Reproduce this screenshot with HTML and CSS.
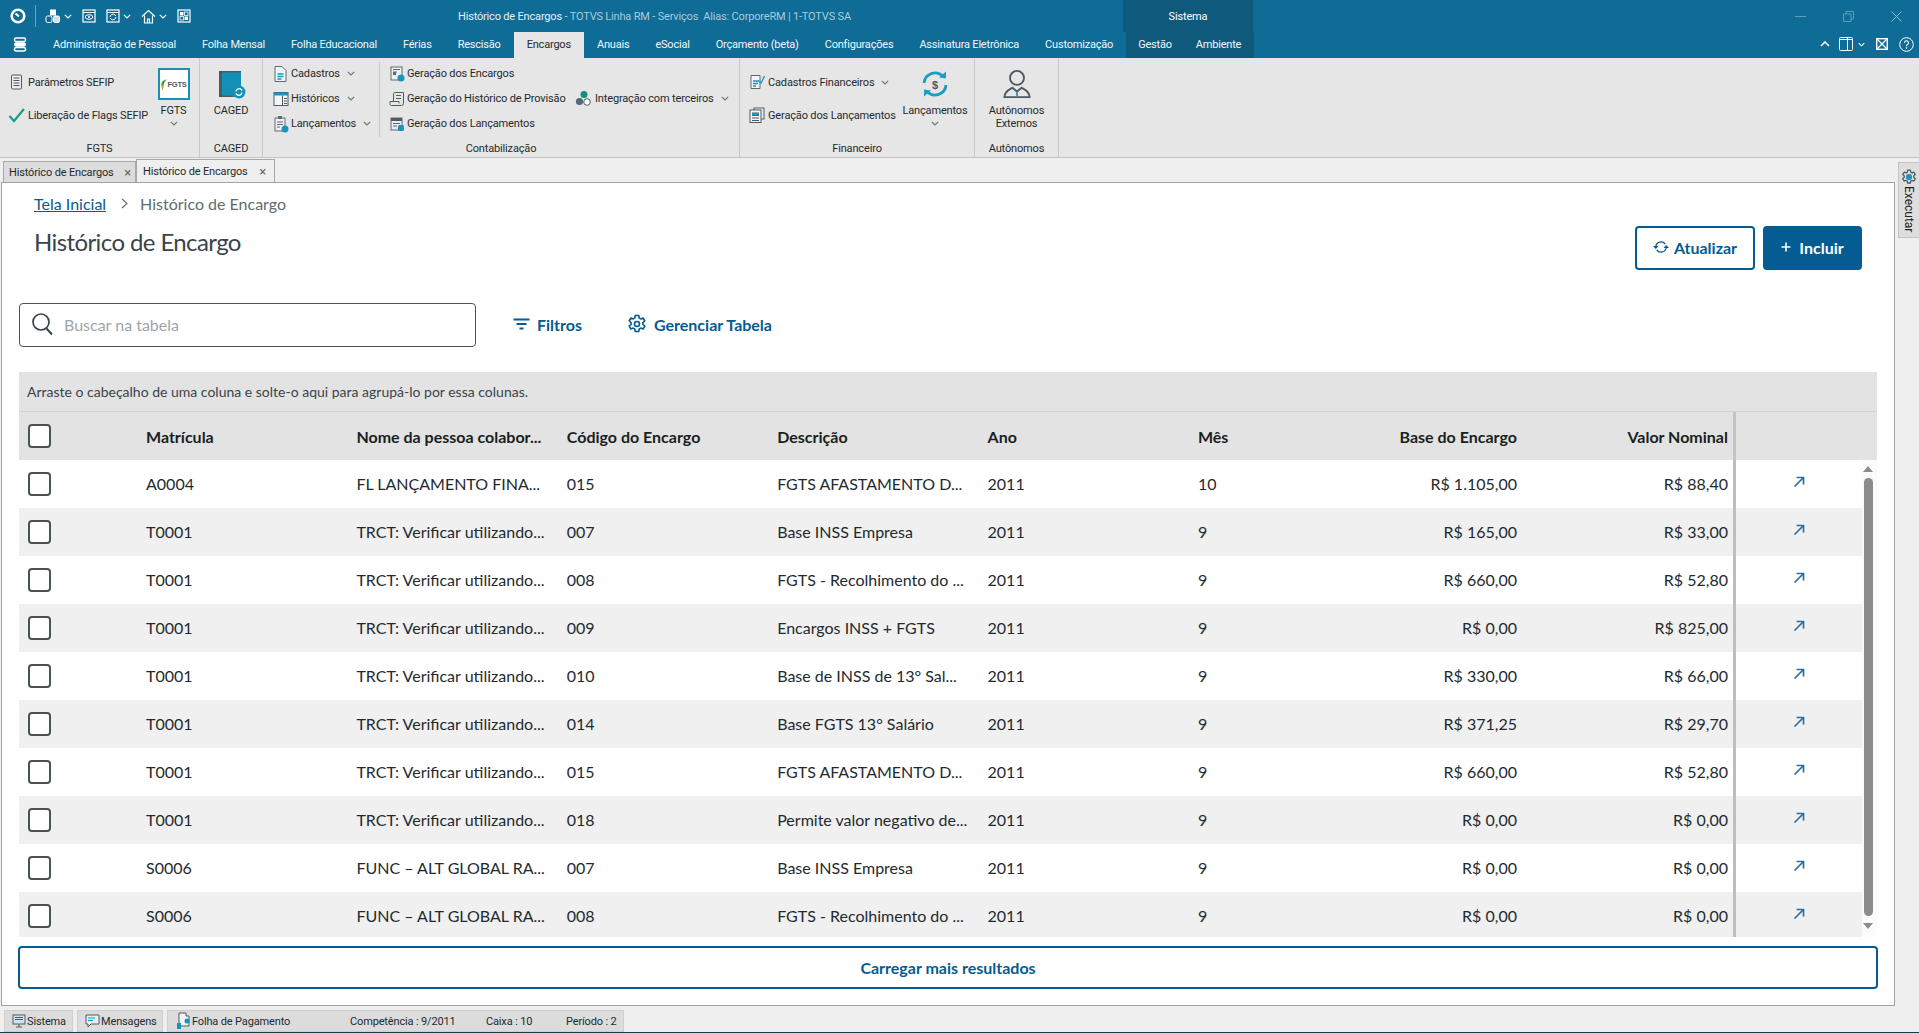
FILE: index.html
```html
<!DOCTYPE html>
<html lang="pt-BR">
<head>
<meta charset="utf-8">
<title>Histórico de Encargos</title>
<link rel="stylesheet" href="styles.css">
</head>
<body>
<svg class="defs" width="0" height="0" aria-hidden="true">
  <symbol id="chev" viewBox="0 0 8 5"><path d="M.8.8 4 4 7.2.8" fill="none" stroke="currentColor" stroke-width="1.2"/></symbol>
  <symbol id="go" viewBox="0 0 12 12"><path d="M1.5 10.5 10 2M3.5 1.5H10.5V8.5" fill="none" stroke="#2a6f9f" stroke-width="1.7"/></symbol>
  <symbol id="gear" viewBox="0 0 20 20"><path d="M8.300 1.500h3.400l.5 2.500 1.500.9 2.400-.9 1.700 3-1.900 1.600v1.800l1.900 1.600-1.700 3-2.400-.9-1.500.9-.5 2.500H8.300l-.5-2.500-1.500-.9-2.400.9-1.700-3 1.900-1.600V8.600L2.200 7l1.700-3 2.400.9 1.500-.9z" fill="none" stroke="currentColor" stroke-width="1.600" stroke-linejoin="round"/><circle cx="10" cy="10" r="2.500" fill="none" stroke="currentColor" stroke-width="1.600"/></symbol>
</svg>

<header class="topbar">
  <div class="titlerow">
    <div class="quick">
      <svg class="qi" width="18" height="18" viewBox="0 0 18 18"><circle cx="9" cy="9" r="6.300" fill="none" stroke="#fff" stroke-width="2.600"/><path d="M6.500 6.500 10 9.500" stroke="#fff" stroke-width="2"/></svg>
      <span class="qsep"></span>
      <svg class="qi" width="16" height="16" viewBox="0 0 16 16"><rect x="5" y="1.500" width="6" height="6" fill="#fff"/><rect x="1" y="8" width="6" height="6.500" rx="1.500" fill="none" stroke="#fff"/><rect x="8.500" y="8" width="6" height="6.500" rx="1.500" fill="#cfe0e8" stroke="#fff"/></svg>
      <svg class="qc" width="8" height="5"><use href="#chev"/></svg>
      <svg class="qi q2" width="14" height="14" viewBox="0 0 14 14"><rect x="1" y="1" width="12" height="12" fill="none" stroke="#fff" stroke-width="1.200"/><path d="M1 3.500h12" stroke="#fff"/><ellipse cx="7" cy="8" rx="3.800" ry="2.300" fill="none" stroke="#fff"/><circle cx="7" cy="8" r="1" fill="#fff"/></svg>
      <svg class="qi q2" width="14" height="14" viewBox="0 0 14 14"><rect x="1" y="1" width="12" height="12" fill="none" stroke="#fff" stroke-width="1.200"/><path d="M1 3.500h12" stroke="#fff"/><path d="M4 8a3 3 0 0 1 5-2l1 1M10 8a3 3 0 0 1-5 2L4 9" fill="none" stroke="#fff"/></svg>
      <svg class="qc" width="8" height="5"><use href="#chev"/></svg>
      <svg class="qi q2" width="15" height="15" viewBox="0 0 15 15"><path d="M1 7.500 7.500 1.500 14 7.500M3.500 6.500v7.500h8V6.500M6.500 14v-4h2v4" fill="none" stroke="#fff" stroke-width="1.200"/></svg>
      <svg class="qc" width="8" height="5"><use href="#chev"/></svg>
      <svg class="qi q2" width="14" height="14" viewBox="0 0 14 14"><rect x="1" y="1" width="12" height="12" fill="none" stroke="#fff" stroke-width="1.200"/><rect x="3" y="3" width="3.500" height="3.500" fill="#fff"/><rect x="7.500" y="3" width="3.500" height="3.500" fill="none" stroke="#fff" stroke-width=".8"/><rect x="3" y="7.500" width="3.500" height="3.500" fill="none" stroke="#fff" stroke-width=".8"/><rect x="7.500" y="7.500" width="3.500" height="3.500" fill="#fff"/></svg>
    </div>
    <div class="wintitle"><span class="wt-main">Histórico de Encargos</span> - TOTVS Linha RM - Serviços&nbsp; Alias: CorporeRM | 1-TOTVS SA</div>
    <div class="ctx-head">Sistema</div>
    <div class="winctl">
      <svg width="11" height="11" viewBox="0 0 11 11"><path d="M0 5.500h11" stroke="#5f9cb8"/></svg>
      <svg width="11" height="11" viewBox="0 0 11 11"><path d="M.5 3h7.500v7.500H.5zM3 3V.5h7.500V8H8" fill="none" stroke="#5f9cb8"/></svg>
      <svg width="11" height="11" viewBox="0 0 11 11"><path d="M.5.500l10 10M10.500.500l-10 10" stroke="#8fbacd"/></svg>
    </div>
  </div>
  <div class="tabrow">
    <svg class="appmenu" width="14" height="15" viewBox="0 0 14 15"><rect x="1.500" y="1" width="11" height="3.400" rx="1.500" fill="none" stroke="#fff" stroke-width="1.500"/><rect x="1.500" y="5.800" width="11" height="3.400" rx="1.500" fill="#fff" stroke="#fff"/><rect x="1.500" y="10.600" width="11" height="3.400" rx="1.500" fill="none" stroke="#fff" stroke-width="1.500"/></svg>
    <nav class="tabs">
      <a class="tab">Administração de Pessoal</a>
      <a class="tab">Folha Mensal</a>
      <a class="tab">Folha Educacional</a>
      <a class="tab">Férias</a>
      <a class="tab">Rescisão</a>
      <a class="tab active">Encargos</a>
      <a class="tab">Anuais</a>
      <a class="tab">eSocial</a>
      <a class="tab">Orçamento (beta)</a>
      <a class="tab">Configurações</a>
      <a class="tab">Assinatura Eletrônica</a>
      <a class="tab">Customização</a>
      <div class="ctx-tabs">
        <a class="tab">Gestão</a>
        <a class="tab">Ambiente</a>
      </div>
    </nav>
    <div class="tabtools">
      <svg width="10" height="6" viewBox="0 0 10 6"><path d="M1 5 5 1l4 4" fill="none" stroke="#fff" stroke-width="1.600"/></svg>
      <svg class="tt-panel" width="14" height="14" viewBox="0 0 14 14"><rect x=".5" y=".5" width="13" height="13" rx="1" fill="none" stroke="#fff"/><path d="M8.500.5v13M.5 2.500h13" stroke="#fff"/></svg>
      <svg class="tt-down" width="7" height="5"><use href="#chev"/></svg>
      <svg class="tt-x" width="12" height="12" viewBox="0 0 12 12"><rect x=".7" y=".7" width="10.600" height="10.600" fill="none" stroke="#fff" stroke-width="1.400"/><path d="M1 1l10 10M11 1 1 11" stroke="#fff" stroke-width="1.200"/></svg>
      <svg class="tt-help" width="15" height="15" viewBox="0 0 15 15"><circle cx="7.500" cy="7.500" r="6.800" fill="none" stroke="#fff"/><path d="M5.500 5.800a2 2 0 1 1 3 1.700c-.7.500-1 .8-1 1.700" fill="none" stroke="#fff" stroke-width="1.100"/><circle cx="7.500" cy="11" r=".8" fill="#fff"/></svg>
    </div>
  </div>
</header>

<section class="ribbon">
  <div class="rgroup g-fgts">
    <div class="rbody">
      <div class="rcol col-two">
        <div class="ritem"><svg class="ri" width="16" height="16" viewBox="0 0 16 16"><rect x="3" y="1" width="10" height="14" rx="1" fill="#e9eef0" stroke="#4f5d63"/><path d="M5 4h6M5 6.500h6M5 9h6M5 11.500h6" stroke="#4f5d63"/></svg><span>Parâmetros SEFIP</span></div>
        <div class="ritem"><svg class="ri" width="17" height="16" viewBox="0 0 17 16"><path d="M1.500 9 6 14 16 2" fill="none" stroke="#15a085" stroke-width="2.200"/></svg><span>Liberação de Flags SEFIP</span></div>
      </div>
      <div class="rbig">
        <div class="fgts-tile"><svg width="7" height="13" viewBox="0 0 7 13"><path d="M6.500 1.500C3 2 1 4 1.500 8L3 12.500C3.500 8 3.500 4.500 6.500 1.500Z" fill="#2f9e44"/><path d="M1.500 6C1 8 2 11 3 12.500L3.300 8Z" fill="#e8a317"/></svg><span>FGTS</span></div>
        <span class="biglabel">FGTS</span>
        <svg class="bigchev" width="8" height="5"><use href="#chev"/></svg>
      </div>
    </div>
    <div class="rlabel">FGTS</div>
  </div>

  <div class="rgroup g-caged">
    <div class="rbody">
      <div class="rbig">
        <svg class="big-ic" width="30" height="30" viewBox="0 0 30 30"><rect x="3" y="1" width="22" height="26" rx="1" fill="#1390b8"/><path d="M4.500 1v26" stroke="#4c5a61" stroke-width="3"/><path d="M3 1.700h22M3 26.300h14" stroke="#4c5a61" stroke-width="1.500"/><circle cx="23" cy="22" r="6.500" fill="#1390b8"/><path d="M20 21.500a3.200 3.200 0 0 1 5.500-1.800l.7.9M26 22.500a3.200 3.200 0 0 1-5.500 1.800l-.7-.9" fill="none" stroke="#fff" stroke-width="1.300"/></svg>
        <span class="biglabel">CAGED</span>
      </div>
    </div>
    <div class="rlabel">CAGED</div>
  </div>

  <div class="rgroup g-cont">
    <div class="rbody">
      <div class="rcol col-three col-a">
        <div class="ritem"><svg class="ri" width="16" height="18" viewBox="0 0 16 18"><path d="M2 1.500h7l4 4v11H2z" fill="#f2f5f6" stroke="#5f6b70"/><path d="M4.500 9h6M4.500 11.500h6M4.500 14h4" stroke="#1a93bd" stroke-width="1.300"/></svg><span>Cadastros</span><svg class="ch" width="8" height="5"><use href="#chev"/></svg></div>
        <div class="ritem"><svg class="ri" width="16" height="16" viewBox="0 0 16 16"><rect x="1" y="1.500" width="14" height="13" fill="#f4f6f7" stroke="#4f5d63"/><rect x="1" y="1.500" width="14" height="3" fill="#1a93bd"/><path d="M9.500 4.500v10M11 7.500h3M11 10h3M11 12.500h3" stroke="#4f5d63"/></svg><span>Históricos</span><svg class="ch" width="8" height="5"><use href="#chev"/></svg></div>
        <div class="ritem"><svg class="ri" width="16" height="18" viewBox="0 0 16 18"><rect x="2" y="3" width="10" height="13" fill="#eef1f2" stroke="#5f6b70"/><rect x="5" y="1" width="4" height="3" fill="#5f6b70"/><path d="M4 7h6M4 9.500h6M4 12h3" stroke="#5f6b70"/><circle cx="12" cy="14" r="3.500" fill="#1a93bd"/></svg><span>Lançamentos</span><svg class="ch" width="8" height="5"><use href="#chev"/></svg></div>
      </div>
      <span class="rsep"></span>
      <div class="rcol col-three col-b">
        <div class="ritem"><svg class="ri" width="16" height="16" viewBox="0 0 16 16"><rect x="2" y="1" width="11" height="13" fill="#eef1f2" stroke="#5f6b70"/><path d="M4 3.500h7M4 6h4M4 8.500h3" stroke="#5f6b70"/><rect x="4" y="6" width="3" height="3" fill="#5f6b70"/><circle cx="12" cy="12" r="3.500" fill="#1a93bd"/></svg><span>Geração dos Encargos</span></div>
        <div class="ritem"><svg class="ri" width="16" height="16" viewBox="0 0 16 16"><path d="M4.500 10.500V2.500a1.500 1.500 0 0 1 1.500-1h8.500v11a2 2 0 0 1-2 2H2.500a1.500 1.500 0 0 1-1.500-2v-2h9v2" fill="none" stroke="#4f5d63"/><path d="M7 4.500h5M7 7.500h5" stroke="#4f5d63"/></svg><span>Geração do Histórico de Provisão</span></div>
        <div class="ritem"><svg class="ri" width="16" height="16" viewBox="0 0 16 16"><rect x="2" y="2" width="11" height="12" fill="#e9edef" stroke="#5f6b70"/><rect x="2" y="2" width="11" height="3" fill="#4f5d63"/><path d="M4 7.500h7M4 10h4" stroke="#5f6b70"/><rect x="9" y="9" width="6" height="6" rx="1.500" fill="#1a93bd"/></svg><span>Geração dos Lançamentos</span></div>
      </div>
      <div class="rcol col-three col-c">
        <div class="ritem"><svg class="ri" width="17" height="17" viewBox="0 0 17 17"><circle cx="9" cy="4.500" r="3.500" fill="#14907a"/><circle cx="4.500" cy="11.500" r="3.600" fill="#4d6b7a"/><circle cx="12" cy="12" r="3.300" fill="#fff" stroke="#4f5d63"/></svg><span>Integração com terceiros</span><svg class="ch" width="8" height="5"><use href="#chev"/></svg></div>
      </div>
    </div>
    <div class="rlabel">Contabilização</div>
  </div>

  <div class="rgroup g-fin">
    <div class="rbody">
      <div class="rcol col-two">
        <div class="ritem"><svg class="ri" width="16" height="16" viewBox="0 0 16 16"><path d="M2 1.500h9v13H2z" fill="#f2f5f6" stroke="#5f6b70"/><path d="M4 7h5M4 9.500h5M4 12h3" stroke="#1a93bd" stroke-width="1.300"/><path d="M9 6.500 12 9l3.500-7" fill="none" stroke="#1a93bd" stroke-width="1.300"/></svg><span>Cadastros Financeiros</span><svg class="ch" width="8" height="5"><use href="#chev"/></svg></div>
        <div class="ritem"><svg class="ri" width="16" height="16" viewBox="0 0 16 16"><rect x="5" y="1" width="10" height="11" fill="#e9edef" stroke="#4f5d63"/><rect x="1" y="3" width="11" height="12.500" fill="#f4f6f7" stroke="#4f5d63"/><path d="M3 6h7M3 8.500h7M3 11h7M3 13.500h7" stroke="#4f5d63"/><rect x="3" y="6" width="7" height="2.500" fill="#1a93bd"/></svg><span>Geração dos Lançamentos</span></div>
      </div>
      <div class="rbig big-lanc">
        <svg class="big-ic" width="28" height="28" viewBox="0 0 28 28"><path d="M3 13A11 11 0 0 1 22 6.500M25 15A11 11 0 0 1 6 21.500" fill="none" stroke="#1d9cc4" stroke-width="2.800"/><path d="M18 7.500 25 8.500V1.500zM10 20.500 3 19.500v7z" fill="#1d9cc4"/><text class="dollar" x="14" y="18.500" text-anchor="middle">$</text></svg>
        <span class="biglabel">Lançamentos</span>
        <svg class="bigchev" width="8" height="5"><use href="#chev"/></svg>
      </div>
    </div>
    <div class="rlabel">Financeiro</div>
  </div>

  <div class="rgroup g-aut">
    <div class="rbody">
      <div class="rbig">
        <svg class="big-ic" width="28" height="28" viewBox="0 0 30 30"><circle cx="15" cy="8.500" r="7.500" fill="none" stroke="#4c5a61" stroke-width="2"/><path d="M1.500 29c0-6 5-8 8.500-10l5 4 5-4c3.500 2 8.500 4 8.500 10z" fill="none" stroke="#4c5a61" stroke-width="2"/><path d="M15 23v5" stroke="#1a93bd" stroke-width="1.800"/></svg>
        <span class="biglabel">Autônomos<br>Externos</span>
      </div>
    </div>
    <div class="rlabel">Autônomos</div>
  </div>
</section>

<div class="workspace">
  <div class="doctabs">
    <div class="doctab">Histórico de Encargos<span class="dx">×</span></div>
    <div class="doctab current">Histórico de Encargos<span class="dx">×</span></div>
  </div>
  <aside class="sidetab">
    <svg width="16" height="16" viewBox="0 0 20 20" class="side-gear"><use href="#gear"/></svg>
    <span class="side-dot"></span>
    <span class="side-text">Executar</span>
  </aside>

  <main class="frame">
    <div class="pagehead">
      <div>
        <div class="crumbs"><a class="crumb-link">Tela Inicial</a><svg class="crumb-sep" width="7" height="11" viewBox="0 0 7 11"><path d="M1 1l5 4.500L1 10" fill="none" stroke="#5f6b70" stroke-width="1.100"/></svg><span>Histórico de Encargo</span></div>
        <h1 class="pagetitle">Histórico de Encargo</h1>
      </div>
      <div class="actions">
        <button class="btn btn-ghost"><svg width="16" height="14" viewBox="0 0 16 14"><path d="M2.800 6.500a5.200 5.200 0 0 1 9.400-2.500M13.200 7.500a5.200 5.200 0 0 1-9.400 2.500" fill="none" stroke="currentColor" stroke-width="1.300"/><path d="M0 6h5.500L2.800 9zM16 8h-5.500l2.700-3z" fill="currentColor"/></svg>Atualizar</button>
        <button class="btn btn-solid"><svg width="10" height="10" viewBox="0 0 10 10"><path d="M5 .5v9M.5 5h9" stroke="#fff" stroke-width="1.600"/></svg>Incluir</button>
      </div>
    </div>

    <div class="toolbar">
      <div class="search">
        <svg width="22" height="24" viewBox="0 0 22 24"><circle cx="10" cy="10" r="8" fill="none" stroke="#3a4448" stroke-width="1.700"/><path d="M15.500 16.500 21 22.500" stroke="#3a4448" stroke-width="2"/></svg>
        <span>Buscar na tabela</span>
      </div>
      <a class="tool tool-filter"><svg width="17" height="12" viewBox="0 0 17 12"><path d="M.5 1.500h16M3.500 6h10M6.500 10.500h4" stroke="currentColor" stroke-width="1.800"/></svg>Filtros</a>
      <a class="tool"><svg width="20" height="20"><use href="#gear"/></svg>Gerenciar Tabela</a>
    </div>

    <div class="grid">
      <div class="groupbar">Arraste o cabeçalho de uma coluna e solte-o aqui para agrupá-lo por essa colunas.</div>
      <div class="row head">
        <div class="cell"><span class="check"></span></div>
        <div class="cell">Matrícula</div>
        <div class="cell">Nome da pessoa colabor...</div>
        <div class="cell">Código do Encargo</div>
        <div class="cell">Descrição</div>
        <div class="cell">Ano</div>
        <div class="cell">Mês</div>
        <div class="cell num">Base do Encargo</div>
        <div class="cell num val">Valor Nominal</div>
        <div class="cell act"></div>
      </div>
      <div class="rows">
        <div class="rowlist">
          <div class="row"><div class="cell"><span class="check"></span></div><div class="cell">A0004</div><div class="cell">FL LANÇAMENTO FINA...</div><div class="cell">015</div><div class="cell">FGTS AFASTAMENTO D...</div><div class="cell">2011</div><div class="cell">10</div><div class="cell num">R$ 1.105,00</div><div class="cell num val">R$ 88,40</div><div class="cell act"><svg width="12" height="12"><use href="#go"/></svg></div></div>
          <div class="row"><div class="cell"><span class="check"></span></div><div class="cell">T0001</div><div class="cell">TRCT: Verificar utilizando...</div><div class="cell">007</div><div class="cell">Base INSS Empresa</div><div class="cell">2011</div><div class="cell">9</div><div class="cell num">R$ 165,00</div><div class="cell num val">R$ 33,00</div><div class="cell act"><svg width="12" height="12"><use href="#go"/></svg></div></div>
          <div class="row"><div class="cell"><span class="check"></span></div><div class="cell">T0001</div><div class="cell">TRCT: Verificar utilizando...</div><div class="cell">008</div><div class="cell">FGTS - Recolhimento do ...</div><div class="cell">2011</div><div class="cell">9</div><div class="cell num">R$ 660,00</div><div class="cell num val">R$ 52,80</div><div class="cell act"><svg width="12" height="12"><use href="#go"/></svg></div></div>
          <div class="row"><div class="cell"><span class="check"></span></div><div class="cell">T0001</div><div class="cell">TRCT: Verificar utilizando...</div><div class="cell">009</div><div class="cell">Encargos INSS + FGTS</div><div class="cell">2011</div><div class="cell">9</div><div class="cell num">R$ 0,00</div><div class="cell num val">R$ 825,00</div><div class="cell act"><svg width="12" height="12"><use href="#go"/></svg></div></div>
          <div class="row"><div class="cell"><span class="check"></span></div><div class="cell">T0001</div><div class="cell">TRCT: Verificar utilizando...</div><div class="cell">010</div><div class="cell">Base de INSS de 13° Sal...</div><div class="cell">2011</div><div class="cell">9</div><div class="cell num">R$ 330,00</div><div class="cell num val">R$ 66,00</div><div class="cell act"><svg width="12" height="12"><use href="#go"/></svg></div></div>
          <div class="row"><div class="cell"><span class="check"></span></div><div class="cell">T0001</div><div class="cell">TRCT: Verificar utilizando...</div><div class="cell">014</div><div class="cell">Base FGTS 13° Salário</div><div class="cell">2011</div><div class="cell">9</div><div class="cell num">R$ 371,25</div><div class="cell num val">R$ 29,70</div><div class="cell act"><svg width="12" height="12"><use href="#go"/></svg></div></div>
          <div class="row"><div class="cell"><span class="check"></span></div><div class="cell">T0001</div><div class="cell">TRCT: Verificar utilizando...</div><div class="cell">015</div><div class="cell">FGTS AFASTAMENTO D...</div><div class="cell">2011</div><div class="cell">9</div><div class="cell num">R$ 660,00</div><div class="cell num val">R$ 52,80</div><div class="cell act"><svg width="12" height="12"><use href="#go"/></svg></div></div>
          <div class="row"><div class="cell"><span class="check"></span></div><div class="cell">T0001</div><div class="cell">TRCT: Verificar utilizando...</div><div class="cell">018</div><div class="cell">Permite valor negativo de...</div><div class="cell">2011</div><div class="cell">9</div><div class="cell num">R$ 0,00</div><div class="cell num val">R$ 0,00</div><div class="cell act"><svg width="12" height="12"><use href="#go"/></svg></div></div>
          <div class="row"><div class="cell"><span class="check"></span></div><div class="cell">S0006</div><div class="cell">FUNC – ALT GLOBAL RA...</div><div class="cell">007</div><div class="cell">Base INSS Empresa</div><div class="cell">2011</div><div class="cell">9</div><div class="cell num">R$ 0,00</div><div class="cell num val">R$ 0,00</div><div class="cell act"><svg width="12" height="12"><use href="#go"/></svg></div></div>
          <div class="row"><div class="cell"><span class="check"></span></div><div class="cell">S0006</div><div class="cell">FUNC – ALT GLOBAL RA...</div><div class="cell">008</div><div class="cell">FGTS - Recolhimento do ...</div><div class="cell">2011</div><div class="cell">9</div><div class="cell num">R$ 0,00</div><div class="cell num val">R$ 0,00</div><div class="cell act"><svg width="12" height="12"><use href="#go"/></svg></div></div>
        </div>
        <div class="vscroll"><span class="up"></span><span class="thumb"></span><span class="down"></span></div>
      </div>
    </div>

    <button class="loadmore">Carregar mais resultados</button>
  </main>
</div>

<footer class="statusbar">
  <div class="sitem s1"><svg width="14" height="14" viewBox="0 0 14 14"><rect x="1" y="1" width="12" height="9" fill="#cfe3ec" stroke="#4f5d63"/><path d="M3 3.500h8M3 5.500h8" stroke="#4f5d63"/><path d="M7 10v3M4 13h6" stroke="#4f5d63"/></svg>Sistema</div>
  <div class="sitem s2"><svg width="15" height="14" viewBox="0 0 15 14"><path d="M1 1h13v9H6l-3 3v-3H1z" fill="#e9eef0" stroke="#4f5d63"/><path d="M3 4h7M3 6.500h5" stroke="#1a93bd"/></svg>Mensagens</div>
  <div class="sitem s3">
    <svg width="14" height="18" viewBox="0 0 14 18"><path d="M3 1h7v3h3v10H3z" fill="#f2f5f6" stroke="#4f5d63"/><rect x="1" y="11" width="4" height="6" fill="#1a93bd"/><circle cx="11" cy="9" r="2.500" fill="#1a93bd"/></svg>
    <span class="s3-name">Folha de Pagamento</span>
    <span class="s3-comp">Competência : 9/2011</span>
    <span class="s3-caixa">Caixa : 10</span>
    <span>Período : 2</span>
  </div>
</footer>
</body>
</html>
```
FILE: styles.css
```css
* { box-sizing: border-box; }
html, body { margin: 0; height: 100%; }
body {
  width: 1919px; height: 1033px; overflow: hidden; position: relative;
  background: #efefef; color: #1f2a2e;
  font-family: Roboto, "Noto Sans", sans-serif; font-size: 11px; letter-spacing: -.15px;
  display: flex; flex-direction: column;
}
svg { display: block; flex: none; }
.defs { position: absolute; }

/* title bar */
.topbar { background: #0e6c96; color: #fff; height: 58px; flex: none; }
.titlerow { height: 32px; display: flex; align-items: center; }
.quick { display: flex; align-items: center; padding-left: 9px; width: 458px; }
.qsep { width: 1px; height: 22px; background: #6ea4bd; margin: 0 9px 0 8px; }
.qc { color: #fff; margin: 0 0 0 3px; }
.q2 { margin-left: 10px; }
.wintitle { width: 665px; color: #a9cbdb; white-space: nowrap; letter-spacing: -.18px; }
.wt-main { color: #e8f1f5; }
.ctx-head { width: 130px; height: 32px; background: #0f5a7c; display: flex; align-items: center; justify-content: center; color: #fff; }
.winctl { margin-left: auto; display: flex; gap: 37px; padding-right: 17px; }
.tabrow { height: 26px; display: flex; align-items: stretch; }
.appmenu { margin: 5px 0 0 13px; }
.tabs { display: flex; align-items: stretch; margin-left: 13px; width: 1214px; letter-spacing: -.2px; }
.tab { padding: 0 13px 1px; display: flex; align-items: center; color: #f2f7f9; white-space: nowrap; height: 26px; }
.tab.active { background: #e6e6e6; color: #1f2a2e; }
.ctx-tabs { display: flex; background: #0f5a7c; margin-left: auto; width: 130px; }
.ctx-tabs .tab { padding: 0 12px 1px; }
.tabtools { margin-left: auto; display: flex; align-items: center; padding: 0 5px 2px 0; color: #fff; }
.tt-panel { margin-left: 9px; }
.tt-down { margin-left: 5px; }
.tt-x { margin-left: 11px; }
.tt-help { margin-left: 11px; }

/* ribbon */
.ribbon { height: 100px; flex: none; background: #e6e6e6; border-bottom: 1px solid #c4c4c4; display: flex; }
.rgroup { border-right: 1px solid #c9c9c9; display: flex; flex-direction: column; }
.g-fgts { width: 200px; }
.g-caged { width: 63px; }
.g-cont { width: 477px; }
.g-fin { width: 235px; }
.g-aut { width: 84px; }
.rbody { height: 82px; display: flex; }
.rlabel { text-align: center; height: 17px; line-height: 17px; }
.rcol { display: flex; flex-direction: column; }
.col-two { gap: 9px; padding-top: 12px; }
.col-two .ritem { height: 24px; }
.col-three { padding-top: 3px; }
.col-three .ritem { height: 25px; }
.ritem { display: flex; align-items: center; white-space: nowrap; }
.ri { margin-right: 3px; }
.ch { margin-left: 7px; color: #6c777c; }
.g-fgts .rcol { padding-left: 8px; width: 150px; }
.g-fgts .ri { width: 17px; margin-right: 3px; }
.rbig { display: flex; flex-direction: column; align-items: center; flex: 1; padding-top: 10px; text-align: center; }
.fgts-tile {
  width: 32px; height: 32px; background: #fff; border: 2px solid #1b8fb6;
  display: flex; align-items: center; justify-content: center;
  font: 700 7.5px "Liberation Sans", sans-serif; color: #4a5a62; letter-spacing: -.2px;
}
.g-fgts .rbig { padding-right: 2px; }
.big-ic { height: 28px; margin: 2px 0; }
.g-caged .big-ic { height: 30px; margin: 2px 0 0; }
.biglabel { line-height: 13px; margin-top: 4px; white-space: nowrap; }
.bigchev { color: #6c777c; margin-top: 4px; }
.col-a { width: 116px; padding-left: 10px; }
.col-a .ri { margin-right: 2px; }
.rsep { width: 1px; height: 75px; background: #c9c9c9; margin-top: 4px; }
.col-b { padding-left: 9px; width: 195px; }
.col-b .ri { margin-right: 2px; }
.col-c { padding: 28px 0 0 0; }
.g-fin .rcol { padding-left: 9px; width: 157px; }
.big-lanc { padding-right: 1px; }
.dollar { font: 700 11px "Liberation Sans", sans-serif; fill: #4c5a61; }

/* workspace */
.workspace { flex: 1; position: relative; display: flex; flex-direction: column; min-height: 0; }
.doctabs { height: 24px; display: flex; align-items: flex-end; padding-left: 3px; flex: none; }
.doctab {
  height: 21px; width: 133px; background: #dcdcdc; border: 1px solid #a8a8a8; border-bottom: 0;
  padding: 0 4px 0 5px; display: flex; align-items: center; justify-content: space-between; white-space: nowrap;
}
.doctab.current { height: 23px; width: 139px; background: #efefef; padding-left: 6px; padding-right: 8px; }
.dx { color: #666; font-size: 13px; }
.sidetab {
  position: absolute; right: 0; top: 4px; width: 21px; height: 76px; background: #dedede;
  border: 1px solid #c4c4c4; border-right: 0; color: #4c5a61;
  display: flex; flex-direction: column; align-items: center; padding-top: 6px;
}
.side-dot { position: absolute; top: 11px; left: 7px; width: 6px; height: 6px; border-radius: 50%; background: #1a93bd; }
.side-text { writing-mode: vertical-rl; color: #222; margin-top: 1px; font-size: 12px; letter-spacing: 0; }
.frame {
  margin: 0 24px 0 1px; height: 824px; background: #fff; border: 1px solid #a3a3a3;
  padding: 0 17px; font-family: Lato, sans-serif; font-size: 16px; letter-spacing: 0; color: #1f2a2e;
  display: flex; flex-direction: column;
}

.pagehead { display: flex; justify-content: space-between; height: 87px; padding: 10px 15px 0 15px; flex: none; }
.crumbs { display: flex; align-items: center; height: 20px; color: #5f6b70; }
.crumb-link { color: #055c92; text-decoration: underline; }
.crumb-sep { margin: 0 12px 0 15px; }
.pagetitle { font-weight: 400; font-size: 24px; line-height: 30px; margin: 14px 0 0; color: #3a4448; letter-spacing: -.6px; }
.actions { display: flex; gap: 8px; padding-top: 33px; }
.btn { height: 44px; border-radius: 4px; font: 700 16px Lato, sans-serif; display: flex; align-items: center; justify-content: center; gap: 5px; padding: 0 0 2px; }
.btn-ghost { width: 120px; background: #fff; color: #055c92; border: 2px solid #055c92; }
.btn-solid { width: 99px; background: #055c92; color: #fff; border: 0; gap: 8px; }

.toolbar { height: 102px; padding: 33px 0 0; display: flex; align-items: flex-start; flex: none; }
.search {
  width: 457px; height: 44px; border: 1px solid #4a5256; border-radius: 4px; display: flex; align-items: center; gap: 11px; padding: 0 0 2px 11px; color: #a0a6a8;
}
.tool { display: flex; align-items: center; height: 44px; gap: 7px; color: #055c92; font-weight: 700; padding-bottom: 2px; }
.tool-filter { margin-left: 37px; margin-right: 45px; }

.grid { width: 1858px; flex: none; }
.groupbar { height: 40px; background: #e3e3e3; padding: 0 0 1px 8px; display: flex; align-items: center; font-size: 14px; color: #3a4448; border-bottom: 1px solid #d4d4d4; }
.row {
  display: grid; grid-template-columns: 119px 210.4px 210.4px 210.4px 210.4px 210.4px 125px 210px 208px 129px;
  height: 48px; align-items: center;
}
.head { background: #e3e3e3; font-weight: 700; color: #1a1f21; grid-template-columns: 119px 210.4px 210.4px 210.4px 210.4px 210.4px 125px 210px 208px 144px; }
.cell { padding: 0 8px; white-space: nowrap; overflow: hidden; height: 100%; display: flex; align-items: center; }
.rowlist .cell { padding-bottom: 2px; }
.rowlist .cell:first-child { padding-bottom: 0; }
.num { justify-content: flex-end; }
.cell.val { padding-right: 5px; }
.cell.act { justify-content: center; border-left: 3px solid #bdbdbd; padding: 0 0 4px; }
.head .act { border-left: 3px solid #c4c4c4; }
.check { width: 23px; height: 24px; border: 2px solid #4a5256; border-radius: 4px; background: #fff; margin-left: 1px; }
.rows { display: flex; height: 477px; overflow: hidden; }
.rowlist { width: 1843px; }
.rowlist .row:nth-child(even) { background: #f0f0f0; }
.vscroll { width: 15px; background: #fbfbfb; display: flex; flex-direction: column; align-items: center; padding: 6px 3px 0 0; }
.up { width: 0; height: 0; border: 5px solid transparent; border-top: 0; border-bottom: 6px solid #8c8c8c; }
.thumb { width: 9px; height: 438px; background: #8c8c8c; border-radius: 5px; margin: 6px 0 7px; }
.down { width: 0; height: 0; border: 5px solid transparent; border-bottom: 0; border-top: 6px solid #8c8c8c; }
.loadmore {
  width: 1860px; height: 43px; margin: 9px 0 0 -1px; background: #fff; border: 2px solid #055c92; border-radius: 4px;
  color: #055c92; font: 700 16px Lato, sans-serif; flex: none;
}

/* status */
.statusbar { height: 27px; flex: none; display: flex; gap: 4px; padding: 4px 0 0 4px; border-bottom: 1px solid #1d3a4c; }
.sitem { height: 22px; background: #dcdcdc; border: 1px solid #cfcfcf; display: flex; align-items: center; white-space: nowrap; padding-left: 7px; gap: 1px; }
.s1 { width: 69px; }
.s2 { width: 86px; }
.s3 { width: 457px; padding-left: 8px; }
.s3-name { width: 158px; padding-left: 1px; }
.s3-comp { width: 135px; }
.s3-caixa { width: 79px; }
```
